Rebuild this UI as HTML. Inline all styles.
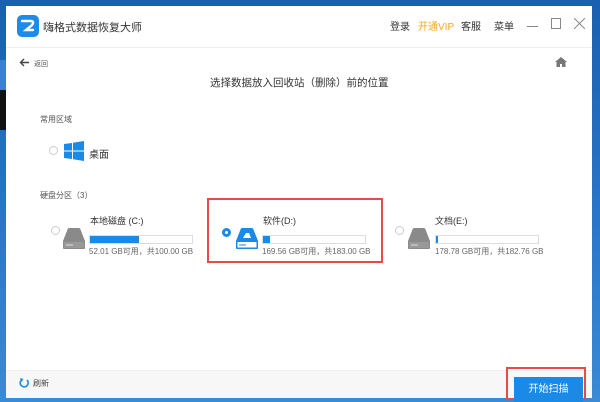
<!DOCTYPE html>
<html><head><meta charset="utf-8"><style>
*{margin:0;padding:0;box-sizing:border-box}
body{width:600px;height:402px;overflow:hidden;background:linear-gradient(180deg,#1a5fb0 0%,#2b78cc 60%,#3a8ad6 100%);font-family:"Liberation Sans","Noto Sans CJK SC",sans-serif;position:relative}
.win{position:absolute;left:6px;top:6px;width:586px;height:392px;background:#fff}
.t{position:absolute;white-space:nowrap}
.radio{position:absolute;width:9px;height:9px;border:1px solid #ccc;border-radius:50%;background:#fff}
.bar{position:absolute;height:9px;border:1px solid #ddd;background:#fff}
.bar i{position:absolute;left:0;top:0;bottom:0;background:#1a8ae6}
.sm{font-size:8px;color:#666}
.nm{font-size:9px;color:#333}
</style></head><body>
<div style="position:absolute;left:0;top:60px;width:6px;height:70px;background:#3d7fd6"></div>
<div style="position:absolute;left:0;top:90px;width:6px;height:40px;background:#111"></div>
<div class="win">
 <div style="position:absolute;left:11px;top:9px;width:22px;height:22px;border-radius:5px;background:#1e8be8"></div>
 <svg style="position:absolute;left:13px;top:12px" width="18" height="16" viewBox="0 0 18 16"><path d="M3 3 H11 Q16 3 13 7 L7 12 H14" stroke="#fff" stroke-width="2.4" fill="none" stroke-linecap="round"/></svg>
 <div class="t" style="left:37px;top:13px;font-size:11px;color:#333">嗨格式数据恢复大师</div>
 <div class="t" style="left:384px;top:12px;font-size:10px;color:#333">登录</div>
 <div class="t" style="left:412px;top:12px;font-size:10px;color:#f5a623">开通VIP</div>
 <div class="t" style="left:455px;top:12px;font-size:10px;color:#333">客服</div>
 <div class="t" style="left:488px;top:12px;font-size:10px;color:#333">菜单</div>
 <div style="position:absolute;left:521px;top:20px;width:11px;height:1px;background:#888"></div>
 <div style="position:absolute;left:545px;top:12px;width:10px;height:11px;border:1px solid #888"></div>
 <svg style="position:absolute;left:568px;top:12px" width="11" height="11"><path d="M0 0L11 11M11 0L0 11" stroke="#888" stroke-width="1"/></svg>
 <div style="position:absolute;left:0;top:41px;width:586px;height:1px;background:#eee"></div>
 <svg style="position:absolute;left:13px;top:52px" width="11" height="9"><path d="M10 4.5H2M5 1L1.5 4.5L5 8" stroke="#444" stroke-width="1.4" fill="none"/></svg>
 <div class="t" style="left:28px;top:53px;font-size:7px;color:#555">返回</div>
 <svg style="position:absolute;left:549px;top:51px" width="12" height="10"><path d="M6 0L12 5H10.5V10H7V7H5V10H1.5V5H0Z" fill="#777"/></svg>
 <div class="t" style="left:204px;top:69px;font-size:10.5px;color:#333">选择数据放入回收站（删除）前的位置</div>
 <div class="t" style="left:34px;top:108px;font-size:8px;color:#555">常用区域</div>
 <div class="radio" style="left:43px;top:140px"></div>
 <svg style="position:absolute;left:58px;top:135px" width="20" height="20"><path d="M0 3L8 2V9.5H0ZM9 1.8L20 0V9.5H9ZM0 10.5H8V18L0 17ZM9 10.5H20V20L9 18.2Z" fill="#1a8ae6"/></svg>
 <div class="t" style="left:83px;top:140px;font-size:10px;color:#333">桌面</div>
 <div class="t" style="left:34px;top:184px;font-size:8px;color:#555">硬盘分区（3）</div>
 <div style="position:absolute;left:201px;top:192px;width:176px;height:65px;border:2px solid #e84a4a"></div>
 <div class="radio" style="left:45px;top:220px"></div>
 <svg style="position:absolute;left:57px;top:222px" width="22" height="21"><path d="M6 0H16Q17 0 17.5 1.5L22 13V20Q22 21 21 21H1Q0 21 0 20V13L4.5 1.5Q5 0 6 0Z" fill="#8a8a8a"/><rect x="1" y="14" width="20" height="6" rx="1" fill="#999"/><path d="M3 17H10" stroke="#ddd"/></svg>
 <div class="t nm" style="left:84px;top:208px">本地磁盘 (C:)</div>
 <div class="bar" style="left:83px;top:229px;width:104px"><i style="width:48%"></i></div>
 <div class="t sm" style="left:83px;top:240px">52.01 GB可用，共100.00 GB</div>
 <div style="position:absolute;left:216px;top:222px;width:9px;height:9px;border-radius:50%;border:3px solid #1a8ae6"></div>
 <svg style="position:absolute;left:230px;top:222px" width="22" height="21"><path d="M6 0H16Q17 0 17.5 1.5L22 13V20Q22 21 21 21H1Q0 21 0 20V13L4.5 1.5Q5 0 6 0Z" fill="#1a8ae6"/><path d="M7 10L10 5H13L15 10Z" fill="#fff"/><rect x="1.5" y="14" width="19" height="5.5" fill="#fff"/><path d="M3 17H10" stroke="#1a8ae6"/></svg>
 <div class="t nm" style="left:257px;top:208px">软件(D:)</div>
 <div class="bar" style="left:256px;top:229px;width:104px"><i style="width:7%"></i></div>
 <div class="t sm" style="left:256px;top:240px">169.56 GB可用，共183.00 GB</div>
 <div class="radio" style="left:389px;top:220px"></div>
 <svg style="position:absolute;left:402px;top:222px" width="22" height="21"><path d="M6 0H16Q17 0 17.5 1.5L22 13V20Q22 21 21 21H1Q0 21 0 20V13L4.5 1.5Q5 0 6 0Z" fill="#8a8a8a"/><rect x="1" y="14" width="20" height="6" rx="1" fill="#999"/><path d="M3 17H10" stroke="#ddd"/></svg>
 <div class="t nm" style="left:429px;top:208px">文档(E:)</div>
 <div class="bar" style="left:429px;top:229px;width:104px"><i style="width:2%"></i></div>
 <div class="t sm" style="left:429px;top:240px">178.78 GB可用，共182.76 GB</div>
 <div style="position:absolute;left:0;top:364px;width:586px;height:28px;background:#f7f7f7;border-top:1px solid #eee"></div>
 <svg style="position:absolute;left:13px;top:372px" width="10" height="10"><path d="M3 1.5A4 4 0 1 0 8 2" stroke="#1a8ae6" stroke-width="1.6" fill="none"/><path d="M1 0L4.5 1L2.5 4Z" fill="#1a8ae6"/></svg>
 <div class="t" style="left:27px;top:372px;font-size:8px;color:#444">刷新</div>
 <div style="position:absolute;left:500px;top:361px;width:80px;height:33px;border:2px solid #e84a4a"></div>
 <div style="position:absolute;left:508px;top:371px;width:69px;height:25px;background:#1a8ae6;color:#fff;font-size:10px;text-align:center;line-height:25px">开始扫描</div>
</div>
</body></html>
